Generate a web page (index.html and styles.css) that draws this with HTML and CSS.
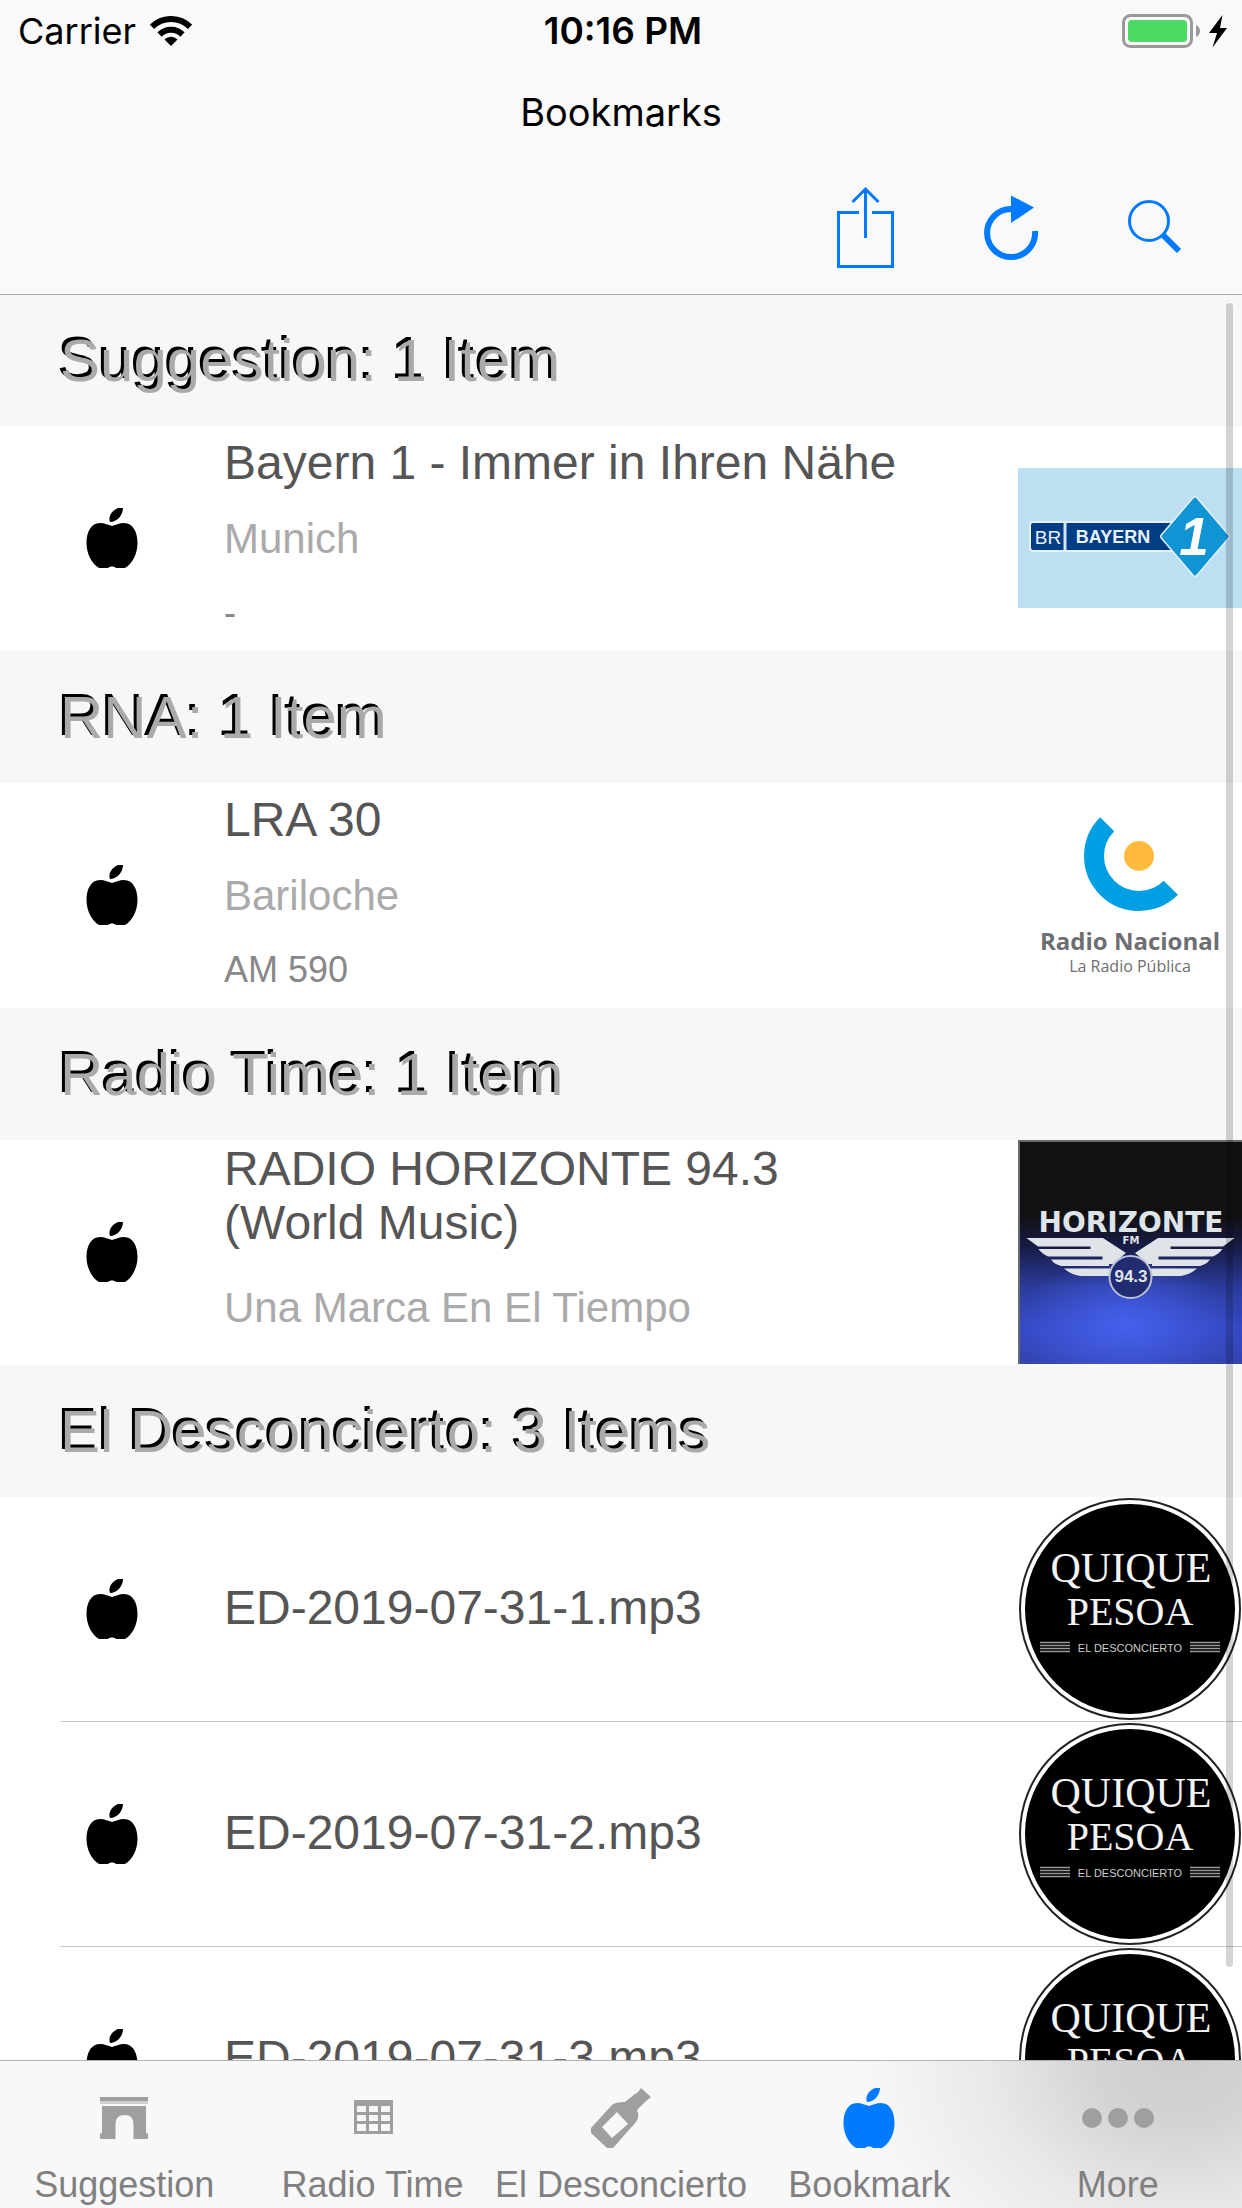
FILE: index.html
```html
<!DOCTYPE html>
<html lang="en">
<head>
<meta charset="utf-8">
<meta name="viewport" content="width=device-width, initial-scale=1">
<title>Bookmarks</title>
<link rel="stylesheet" href="styles.css">
</head>
<body class="app">

<svg class="defs" aria-hidden="true">
  <symbol id="apple" viewBox="0 0 60 60">
    <path d="M30 18C26 17 23 15 18 15C9 15 4.500 24 4.500 35C4.500 46 10 56 17 60H26C28 58 32 58 34 60H43C50 56 55.500 46 55.500 35C55.500 24 51 15 42 15C37 15 34 17 30 18Z"/>
    <path d="M41 0H36C29 3 26 9 28 14C35 14 41 7 41 0Z"/>
  </symbol>
  <symbol id="quique" viewBox="0 0 224 224">
    <circle cx="112" cy="112" r="110" fill="#fff" stroke="#222" stroke-width="2"/>
    <circle cx="112" cy="112" r="105" fill="#000"/>
    <g fill="#f4f4f4" text-anchor="middle" font-family="'Liberation Serif', serif">
      <text x="113" y="85" font-size="42">QUIQUE</text>
      <text x="112" y="128" font-size="40">PESOA</text>
      <text x="112" y="155" font-size="11" fill="#ccc" font-family="'Liberation Sans', sans-serif">EL DESCONCIERTO</text>
    </g>
    <path d="M22 145.500H52M22 148.500H52M22 151.500H52M22 154.500H52M172 145.500H202M172 148.500H202M172 151.500H202M172 154.500H202" stroke="#999" stroke-width="1.500"/>
  </symbol>
</svg>

<header class="top">
  <div class="status">
    <div class="status-side">
      <span>Carrier</span>
      <svg class="wifi" viewBox="0 0 42 30" aria-label="Wi-Fi">
        <path d="M21 30L14.500 23.500A9.200 9.200 0 0 1 27.500 23.500Z"/>
        <path d="M9.500 18.500A16.300 16.300 0 0 1 32.500 18.500" fill="none" stroke="#000" stroke-width="6"/>
        <path d="M2 10.800A27 27 0 0 1 40 10.800" fill="none" stroke="#000" stroke-width="6"/>
      </svg>
    </div>
    <time class="clock">10:16 PM</time>
    <div class="status-side status-end">
      <svg class="battery" viewBox="0 0 106 34" aria-label="Battery charging">
        <rect x="1.500" y="1.500" width="68" height="31" rx="7" fill="none" stroke="#999" stroke-width="3"/>
        <rect x="6" y="6" width="59" height="22" rx="4" fill="#4cd964"/>
        <path d="M74 11Q78 13 78 17T74 23Z" fill="#999"/>
        <path d="M100.500 1L87 19H95L90.500 33.500L105 14H98Z"/>
      </svg>
    </div>
  </div>
  <h1 class="title">Bookmarks</h1>
  <div class="toolbar">
    <button class="tool" type="button" aria-label="Share">
      <svg viewBox="0 0 96 84"><path d="M41 26.500H20.500V80.500H74.500V26.500H54M47.500 52V3M34.500 16L47.500 3L60.500 16" stroke-width="3"/></svg>
    </button>
    <button class="tool" type="button" aria-label="Refresh">
      <svg viewBox="0 0 96 84"><path d="M71 45A24 24 0 1 1 47 23" stroke-width="6"/><path class="solid" d="M47 9.500L70 21.500L47 37Z"/></svg>
    </button>
    <button class="tool" type="button" aria-label="Search">
      <svg viewBox="0 0 96 84"><circle cx="39" cy="35" r="19.500" stroke-width="3"/><path d="M53 49L69 65" stroke-width="6"/></svg>
    </button>
  </div>
</header>

<div class="content">
  <main class="list">
    <section>
      <h2 class="group">Suggestion: 1 Item</h2>
      <ul class="rows">
        <li class="row">
          <svg class="mark"><use href="#apple"/></svg>
          <div class="text">
            <p class="name">Bayern 1 - Immer in Ihren Nähe</p>
            <p class="sub">Munich</p>
            <p class="note">-</p>
          </div>
          <svg class="logo" viewBox="0 0 224 140" aria-label="BR Bayern 1">
            <rect width="224" height="140" fill="#bcdff2"/>
            <rect x="12" y="54" width="150" height="29" rx="3" fill="#003d85" stroke="#e4f1fa" stroke-width="2"/>
            <path d="M47 54V83" stroke="#d4e6f4" stroke-width="3"/>
            <path d="M177 31L209 68.500L177 106L145 68.500Z" fill="#1094d4" stroke="#e4f1fa" stroke-width="6" stroke-linejoin="round"/>
            <path d="M177 31L209 68.500L177 106L145 68.500Z" fill="#1094d4" stroke="#1094d4" stroke-width="3" stroke-linejoin="round"/>
            <g fill="#e8f2fa" text-anchor="middle" font-family="'Liberation Sans', sans-serif">
              <text x="30" y="76" font-size="19">BR</text>
              <text x="95" y="75" font-size="18" font-weight="700">BAYERN</text>
              <text x="176" y="87" font-size="53" font-weight="700" font-style="italic" fill="#fff">1</text>
            </g>
          </svg>
        </li>
      </ul>
    </section>

    <section>
      <h2 class="group">RNA: 1 Item</h2>
      <ul class="rows">
        <li class="row">
          <svg class="mark"><use href="#apple"/></svg>
          <div class="text">
            <p class="name">LRA 30</p>
            <p class="sub">Bariloche</p>
            <p class="note">AM 590</p>
          </div>
          <svg class="logo" viewBox="0 0 224 224" aria-label="Radio Nacional, La Radio Pública">
            <path d="M89.200 41.200A44 44 0 1 0 152.800 104.800" fill="none" stroke="#009fe3" stroke-width="20"/>
            <circle cx="121" cy="73" r="15" fill="#ffbb3d"/>
            <g fill="#6d6e71" text-anchor="middle" font-family="'Open Sans', sans-serif">
              <text x="112" y="167" font-size="24" font-weight="700">Radio Nacional</text>
              <text x="112" y="189" font-size="16">La Radio Pública</text>
            </g>
          </svg>
        </li>
      </ul>
    </section>

    <section>
      <h2 class="group">Radio Time: 1 Item</h2>
      <ul class="rows">
        <li class="row">
          <svg class="mark"><use href="#apple"/></svg>
          <div class="text text-long">
            <p class="name">RADIO HORIZONTE 94.3 (World Music)</p>
            <p class="sub">Una Marca En El Tiempo</p>
          </div>
          <svg class="logo" viewBox="0 0 224 224" aria-label="Horizonte FM 94.3">
            <defs>
              <linearGradient id="sky" x1="0" y1="0" x2="0" y2="1">
                <stop offset="0" stop-color="#111"/><stop offset=".34" stop-color="#111114"/>
                <stop offset=".48" stop-color="#181c48"/><stop offset=".66" stop-color="#2c3c9c"/>
                <stop offset=".84" stop-color="#3549c4"/><stop offset="1" stop-color="#3444b0"/>
              </linearGradient>
              <radialGradient id="glow" cx=".48" cy=".83" r=".5" gradientTransform="translate(0 .33) scale(1 .6)">
                <stop offset="0" stop-color="#4560ec"/><stop offset="1" stop-color="#4560ec" stop-opacity="0"/>
              </radialGradient>
            </defs>
            <rect width="224" height="224" fill="url(#sky)"/>
            <rect width="224" height="224" fill="url(#glow)"/>
            <path d="M1 224V1H224" fill="none" stroke="#666b70" stroke-width="2"/>
            <g fill="#dfe4e8">
              <path d="M8.500 98H85L108 113Q101 118 98 124H91V128.500H92V136H62Q52 134 46 128.500H91V126H43Q36 124 33 119.500H84.500V116.500H30Q24 114 20.500 109H72.500V106.500H20Z"/>
              <path transform="matrix(-1 0 0 1 225 0)" d="M8.500 98H85L108 113Q101 118 98 124H91V128.500H92V136H62Q52 134 46 128.500H91V126H43Q36 124 33 119.500H84.500V116.500H30Q24 114 20.500 109H72.500V106.500H20Z"/>
            </g>
            <circle cx="112.500" cy="137" r="21" fill="#222c72" stroke="#b9bfd4" stroke-width="2"/>
            <g fill="#dfe4e8" font-weight="700" text-anchor="middle" font-family="'DejaVu Sans', sans-serif">
              <text x="113" y="92" font-size="28">HORIZONTE</text>
              <text x="113" y="104" font-size="10">FM</text>
              <text x="113" y="142" font-size="17" font-family="'Liberation Sans', sans-serif">94.3</text>
            </g>
          </svg>
        </li>
      </ul>
    </section>

    <section>
      <h2 class="group">El Desconcierto: 3 Items</h2>
      <ul class="rows">
        <li class="row">
          <svg class="mark"><use href="#apple"/></svg>
          <div class="text"><p class="name">ED-2019-07-31-1.mp3</p></div>
          <svg class="logo" viewBox="0 0 224 224" aria-label="Quique Pesoa, El Desconcierto"><use href="#quique"/></svg>
        </li>
        <li class="row">
          <svg class="mark"><use href="#apple"/></svg>
          <div class="text"><p class="name">ED-2019-07-31-2.mp3</p></div>
          <svg class="logo" viewBox="0 0 224 224" aria-label="Quique Pesoa, El Desconcierto"><use href="#quique"/></svg>
        </li>
        <li class="row">
          <svg class="mark"><use href="#apple"/></svg>
          <div class="text"><p class="name">ED-2019-07-31-3.mp3</p></div>
          <svg class="logo" viewBox="0 0 224 224" aria-label="Quique Pesoa, El Desconcierto"><use href="#quique"/></svg>
        </li>
      </ul>
    </section>
  </main>
  <div class="scroll-thumb"></div>
</div>

<nav class="tabs">
  <a class="tab" href="#suggestion">
    <svg viewBox="0 0 60 60"><path d="M6 9H54V13H6Z"/><path d="M6 13H54V16H6Z" opacity=".45"/><path d="M8 18H52V45L54 46V51H39.500V36Q39.500 27 30.500 27T21.500 36V51H6V46L8 45Z"/></svg>
    <span>Suggestion</span>
  </a>
  <a class="tab" href="#radio-time">
    <svg viewBox="0 0 60 60"><path fill-rule="evenodd" d="M11 12H50V46H11ZM14 18V24H23V18ZM26 18V24H35V18ZM38 18V24H47V18ZM14 27V33H23V27ZM26 27V33H35V27ZM38 27V33H47V27ZM14 36V43H23V36ZM26 36V43H35V36ZM38 36V43H47V36Z"/></svg>
    <span>Radio Time</span>
  </a>
  <a class="tab" href="#el-desconcierto">
    <svg viewBox="0 0 60 60"><path fill-rule="evenodd" d="M0 40L21 17Q24 14 34 14L44 6Q47 5 50 0L60 9Q56 12 54 14L46 22Q49 28 45 34L22 60H16L0 45ZM26 24L11 39L21 50L37 36Z"/></svg>
    <span>El Desconcierto</span>
  </a>
  <a class="tab" href="#bookmark" aria-current="page">
    <svg><use href="#apple"/></svg>
    <span>Bookmark</span>
  </a>
  <a class="tab" href="#more">
    <svg viewBox="0 0 60 60"><circle cx="4" cy="30" r="10"/><circle cx="30" cy="30" r="10"/><circle cx="56" cy="30" r="10"/></svg>
    <span>More</span>
  </a>
</nav>

</body>
</html>
```
FILE: styles.css
```css
* {
  box-sizing: border-box;
}

.app {
  display: flex;
  flex-direction: column;
  height: 100vh;
  margin: 0;
  background: #fff;
  color: #000;
  font-family: "Liberation Sans", Arial, sans-serif;
}

.defs {
  position: absolute;
  width: 0;
  height: 0;
}

/* Status bar, title and toolbar */

.top {
  flex: none;
  background: #f9f9f9;
  border-bottom: 1px solid #aaa;
  font-family: Inter, sans-serif;
}

.status {
  display: grid;
  grid-template-columns: 1fr auto 1fr;
  align-items: center;
  height: 62px;
  padding: 0 14px 0 18px;
  font-size: 36px;
  line-height: 44px;
}

.status-side {
  display: flex;
  align-items: center;
  gap: 14px;
}

.status-end {
  justify-content: flex-end;
}

.wifi {
  width: 42px;
  height: 30px;
}

.battery {
  width: 106px;
  height: 34px;
}

.clock {
  font-size: 37px;
  font-weight: 600;
}

.title {
  margin: 0;
  padding: 24px 0;
  font-size: 38px;
  font-weight: 400;
  line-height: 52px;
  text-align: center;
}

.toolbar {
  display: flex;
  justify-content: flex-end;
  gap: 50px;
  padding: 24px 36px;
}

.tool {
  padding: 0;
  border: 0;
  background: none;
  cursor: pointer;
}

.tool svg {
  display: block;
  width: 96px;
  height: 84px;
  fill: none;
  stroke: #007aff;
}

.tool .solid {
  fill: #007aff;
  stroke: none;
}

/* Bookmark list */

.content {
  position: relative;
  flex: 1;
  min-height: 0;
}

.list {
  height: 100%;
  overflow-y: auto;
  scrollbar-width: none;
}

.scroll-thumb {
  position: absolute;
  top: 8px;
  right: 9px;
  bottom: 93px;
  width: 7px;
  border-radius: 4px;
  background: rgba(0, 0, 0, 0.17);
}

.group {
  margin: 0;
  padding: 34px 60px 32px;
  background: #f7f7f7;
  color: #aaa;
  font-size: 60px;
  font-weight: 400;
  line-height: 66px;
  text-shadow: -3px -3px 0 #000;
}

section:first-child .group {
  padding-top: 33px;
}

.rows {
  margin: 0;
  padding: 0;
  list-style: none;
}

.row {
  display: grid;
  grid-template-columns: 224px 1fr 224px;
  align-items: center;
  height: 225px;
  padding-bottom: 1px;
}

.row:not(:last-child) {
  border-bottom: 1px solid transparent;
  padding-bottom: 0;
  background: linear-gradient(#c8c7cc, #c8c7cc) right bottom / calc(100% - 60px) 1px no-repeat border-box;
}

.mark {
  justify-self: center;
  width: 60px;
  height: 60px;
}

.logo {
  display: block;
  width: 100%;
}

.text {
  display: flex;
  flex-direction: column;
  gap: 22px;
  max-width: 700px;
  padding-bottom: 2px;
}

.text-long {
  gap: 31px;
  max-width: 600px;
  padding-bottom: 28px;
}

.name,
.sub,
.note {
  margin: 0;
}

.name {
  color: #555;
  font-size: 48px;
  line-height: 54px;
}

.sub {
  color: #aaa;
  font-size: 42px;
  line-height: 54px;
}

.note {
  color: #888;
  font-size: 36px;
  line-height: 50px;
}

/* Tab bar */

.tabs {
  display: grid;
  flex: none;
  grid-template-columns: repeat(5, minmax(0, 1fr));
  padding: 27px 0 2px;
  border-top: 1px solid #b2b2b2;
  background: radial-gradient(ellipse 26% 175% at 95% 0, #cecece, #d3d3d3 25%, #e9e9e9 60%, #f8f8f8);
}

.tab {
  display: flex;
  flex-direction: column;
  align-items: center;
  gap: 16px;
  color: #808080;
  font-size: 36px;
  line-height: 42px;
  text-decoration: none;
  white-space: nowrap;
}

.tab svg {
  width: 60px;
  height: 60px;
  overflow: visible;
  fill: #9f9f9f;
}

.tab[aria-current] svg {
  fill: #007aff;
}
```
